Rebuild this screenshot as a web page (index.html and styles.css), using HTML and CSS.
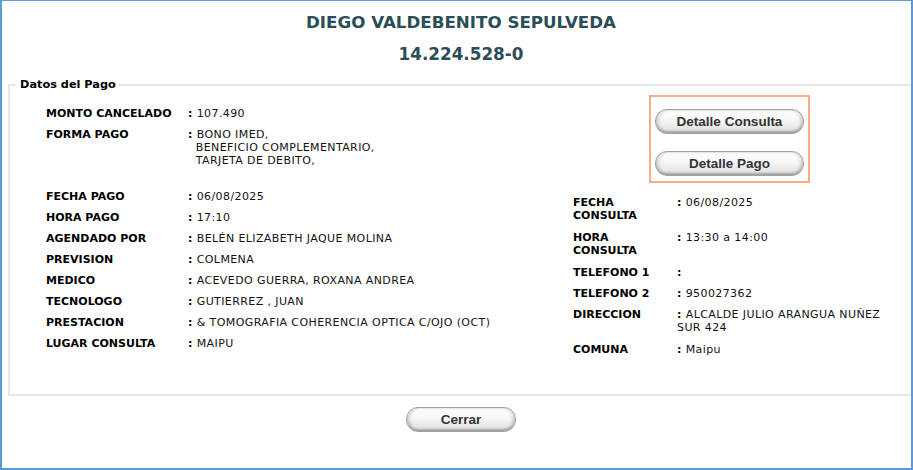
FILE: index.html
```html
<!DOCTYPE html>
<html lang="es">
<head>
<meta charset="utf-8">
<title>Datos del Pago</title>
<link rel="stylesheet" href="styles.css">
</head>
<body>
<div class="window">
  <header class="head">
    <h1 class="name">DIEGO VALDEBENITO SEPULVEDA</h1>
    <h2 class="rut">14.224.528-0</h2>
  </header>
  <fieldset class="box">
    <legend class="legend">Datos del Pago</legend>
    <div class="cols">
      <div class="left">
        <dl class="grid grid-left">
          <dt>MONTO CANCELADO</dt><dd><b>:</b> 107.490</dd>
          <dt>FORMA PAGO</dt><dd class="multi"><b>:</b> BONO IMED,<br>&nbsp; BENEFICIO COMPLEMENTARIO,<br>&nbsp; TARJETA DE DEBITO,</dd>
          <dt>FECHA PAGO</dt><dd><b>:</b> 06/08/2025</dd>
          <dt>HORA PAGO</dt><dd><b>:</b> 17:10</dd>
          <dt>AGENDADO POR</dt><dd><b>:</b> BELÉN ELIZABETH JAQUE MOLINA</dd>
          <dt>PREVISION</dt><dd><b>:</b> COLMENA</dd>
          <dt>MEDICO</dt><dd><b>:</b> ACEVEDO GUERRA, ROXANA ANDREA</dd>
          <dt>TECNOLOGO</dt><dd><b>:</b> GUTIERREZ , JUAN</dd>
          <dt>PRESTACION</dt><dd><b>:</b> &amp; TOMOGRAFIA COHERENCIA OPTICA C/OJO (OCT)</dd>
          <dt>LUGAR CONSULTA</dt><dd><b>:</b> MAIPU</dd>
        </dl>
      </div>
      <div class="right">
        <div class="actions">
          <button class="btn btn-wide" type="button">Detalle Consulta</button>
          <button class="btn btn-wide" type="button">Detalle Pago</button>
        </div>
        <dl class="grid grid-right">
          <dt class="two">FECHA<br>CONSULTA</dt><dd><b>:</b> 06/08/2025</dd>
          <dt class="two">HORA<br>CONSULTA</dt><dd><b>:</b> 13:30 a 14:00</dd>
          <dt>TELEFONO 1</dt><dd><b>:</b></dd>
          <dt>TELEFONO 2</dt><dd><b>:</b> 950027362</dd>
          <dt>DIRECCION</dt><dd class="two"><b>:</b> ALCALDE JULIO ARANGUA NUÑEZ<br>SUR 424</dd>
          <dt>COMUNA</dt><dd><b>:</b> Maipu</dd>
        </dl>
      </div>
    </div>
  </fieldset>
  <div class="footer">
    <button class="btn btn-close" type="button">Cerrar</button>
  </div>
</div>
</body>
</html>
```
FILE: styles.css
```css
* { box-sizing: border-box; }
html, body { margin: 0; padding: 0; background: #fff; }
body {
  font-family: "DejaVu Sans", Verdana, sans-serif;
  color: #000;
  overflow: hidden;
}
.window {
  width: 913px;
  height: 470px;
  border: 1px solid #5b9bd5;
  border-left-width: 2px;
  border-right-width: 2px;
  border-bottom-width: 2px;
  overflow: hidden;
}
.head {
  text-align: center;
  color: #2b4d57;
  padding-top: 11px;
  padding-left: 9px;
}
.name {
  margin: 0;
  font-size: 16.7px;
  line-height: 20px;
  font-weight: bold;
}
.rut {
  margin: 12px 0 0;
  font-size: 16.8px;
  line-height: 20px;
  font-weight: bold;
}
.box {
  margin: 14px 0 0 6px;
  width: 920px;
  height: 318px;
  border: 2px solid #e6e6e6;
  padding: 4px 0 0 36px;
}
.legend {
  font-size: 11.3px;
  font-weight: bold;
  padding: 0 3px;
  margin-left: -29px;
  line-height: 13px;
}
.cols {
  display: flex;
}
.left {
  width: 527px;
  padding-top: 12px;
}
.right {
  width: 313px;
  display: flex;
  flex-direction: column;
}
.grid {
  display: grid;
  margin: 0;
  row-gap: 8px;
  font-size: 11px;
  line-height: 13px;
}
.grid dt { font-weight: bold; margin: 0; }
.grid dd { margin: 0; font-size: 11px; letter-spacing: 0.4px; color: #111; }
.grid dd b { font-weight: bold; color: #000; }
.grid-left { grid-template-columns: 142px auto; }
.grid-left .multi { padding-bottom: 15px; }
.grid-right { grid-template-columns: 104px 210px; margin-top: 13px; }
.grid-right .two { padding-bottom: 1px; }
.actions {
  align-self: center;
  border: 2px solid #f8ad87;
  width: 161px;
  height: 88px;
  display: flex;
  flex-direction: column;
  align-items: center;
  gap: 17px;
  padding-top: 12px;
}
.btn {
  font-family: "Liberation Sans", Arial, sans-serif;
  font-weight: bold;
  font-size: 13.5px;
  color: #333;
  height: 25px;
  border: 1px solid #a0a0a0;
  border-radius: 12px / 12px;
  background: linear-gradient(#ffffff 0%, #f6f6f6 45%, #e6e6e6 80%, #cccccc 100%);
  box-shadow: inset 0 -2px 2px rgba(0,0,0,0.14), inset 3px 0 3px rgba(0,0,0,0.12), inset -3px 0 3px rgba(0,0,0,0.12);
  padding: 0;
}
.btn-wide { width: 149px; }
.footer {
  display: flex;
  justify-content: center;
  padding-top: 11px;
  padding-left: 9px;
}
.btn-close { width: 110px; }
```
